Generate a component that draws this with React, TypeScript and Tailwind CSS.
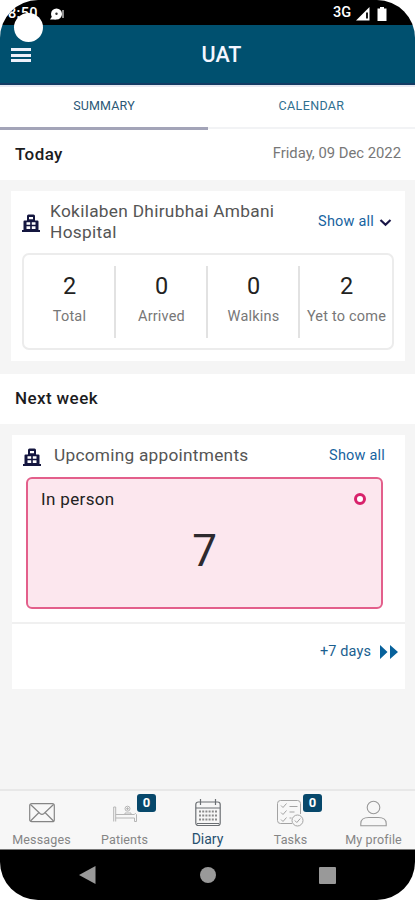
import React from 'react';
import { clsx } from 'clsx';

interface Stat {
  label: string;
  value: number;
}

interface NavItem {
  label: string;
  icon: React.ReactNode;
  badge?: number;
  isActive?: boolean;
}

const STATS: Stat[] = [
  { label: 'Total', value: 2 },
  { label: 'Arrived', value: 0 },
  { label: 'Walkins', value: 0 },
  { label: 'Yet to come', value: 2 },
];

// --- Icons ---
const HospitalIcon: React.FC = () => (
  <svg width="18" height="18" viewBox="0 0 18 18" className="mt-[2px] block shrink-0">
    <path fill="#14163f" d="M0 16h1.500V7.500q0-1 1-1H5V2q0-1.500 1.500-1.500h5Q13 .5 13 2v4.500h2.500q1 0 1 1V16H18v2H0z" />
    <path fill="#fff" d="M7 3h4v2.200H7zM4.500 8.300h3.700v2.400H4.500zM9.800 8.300h3.700v2.400H9.800zM4.500 12.300h3.700V15H4.500zM9.800 12.300h3.700V15H9.800z" />
  </svg>
);

const MailIcon: React.FC = () => (
  <svg width="26" height="20" viewBox="0 0 26 20" fill="none" stroke="#858585" strokeWidth="1.200">
    <rect x=".7" y=".7" width="24.600" height="18" rx="2" />
    <path d="M1.500 1.500 11 10.500q2 1.800 4 0L24.500 1.500M1.500 18l8.500-8.500M24.500 18 16 9.500" />
  </svg>
);

const BedIcon: React.FC = () => (
  <svg width="24" height="17" viewBox="0 0 24 17" fill="none" stroke="#b5b5b5" strokeWidth="1">
    <path d="M.7 2v14.500M2.700 2v14.500M.7 2h2M2.700 9.500h18.500q1.500-2 2.300 0v7h-2V13H2.700" />
    <circle cx="14.500" cy="3.700" r="2.500" />
    <path d="M14.500 2.200v3M13 3.700h3M12 9.500V8h6v1.500" />
  </svg>
);

const DiaryIcon: React.FC = () => (
  <svg width="26" height="28" viewBox="0 0 26 28" fill="none" stroke="#6b6f73" strokeWidth="1.200">
    <rect x=".8" y="3" width="24.400" height="23.500" rx="2.500" />
    <path d="M.8 9h24.400M5.500 0v6M20.500 0v6M2 24.500h22" />
    <path d="M4 12.500h18M4 16.500h18M4 20.500h18" strokeWidth="2" strokeDasharray="2 1.200" stroke="#8a8a8a" />
  </svg>
);

const TasksIcon: React.FC = () => (
  <svg width="27" height="27" viewBox="0 0 27 27" fill="none" stroke="#a3a3a3" strokeWidth="1">
    <path d="M15 23.500H3.500q-3 0-3-3v-17q0-3 3-3h17q3 0 3 3V14" />
    <path d="m4 5.500 2 2 3.500-4M4 12.500l2 2 3.500-4M4 19.500l2 2 3.500-4M12.500 6.500h8M12.500 12h5M12.500 18h2" />
    <circle cx="20.500" cy="20.500" r="5.500" />
    <path d="m17.800 20.500 2 2 3.500-4" />
  </svg>
);

const ProfileIcon: React.FC = () => (
  <svg width="27" height="27" viewBox="0 0 27 27" fill="none" stroke="#999" strokeWidth="1.100">
    <circle cx="13.500" cy="7.500" r="6.300" />
    <path d="M.8 25.700v-2.200q0-6 8-6h9.400q8 0 8 6v2.200z" />
  </svg>
);

const NAV_ITEMS: NavItem[] = [
  { label: 'Messages', icon: <MailIcon /> },
  { label: 'Patients', icon: <BedIcon />, badge: 0 },
  { label: 'Diary', icon: <DiaryIcon />, isActive: true },
  { label: 'Tasks', icon: <TasksIcon />, badge: 0 },
  { label: 'My profile', icon: <ProfileIcon /> },
];

const StatusBar: React.FC = () => (
  <div className="relative flex h-[25px] items-center justify-between bg-black pl-[8px] pr-[28px] text-white">
    <div className="flex items-center pt-[3px]">
      <span className="w-[42px] text-[14.5px] font-medium leading-none tracking-[0.3px]">8:50</span>
      <svg width="15" height="13" viewBox="0 0 15 13">
        <circle cx="6.500" cy="6" r="5.500" fill="#fff" />
        <path d="M0 11.500 3 7l3 4.500z" fill="#fff" />
        <circle cx="6.500" cy="5.700" r="1.200" fill="#333" />
        <path d="M13 2v8" stroke="#bbb" strokeWidth="1.500" />
      </svg>
    </div>
    <div className="flex items-center pt-[2px]">
      <span className="w-[23px] text-[14.5px] font-medium leading-none">3G</span>
      <svg width="14" height="14" viewBox="0 0 14 14">
        <path d="M13.500 0v13.500H0z" fill="#fff" />
        <path d="M11 5.500v6" stroke="#000" strokeWidth="1.800" />
      </svg>
      <svg width="10" height="14" viewBox="0 0 10 14" className="ml-[7px]">
        <path d="M3 0h4v1.500h2.500V14H.5V1.500H3z" fill="#fff" />
      </svg>
    </div>
    {/* Camera cutout */}
    <div className="absolute left-[14px] top-[13px] z-10 size-[29px] rounded-full bg-white" />
  </div>
);

const Header: React.FC = () => (
  <header className="flex h-[60px] items-center border-b-2 border-[#143b63] bg-[#00506f] px-[11px]">
    <div className="mt-[2px] flex w-5 flex-col gap-[2.5px]">
      <div className="h-[3px] bg-[#eef1fa]" />
      <div className="h-[3px] bg-[#eef1fa]" />
      <div className="h-[3px] bg-[#eef1fa]" />
    </div>
    <h1 className="flex-1 pl-[8px] pt-[2px] text-center text-[21.5px] font-medium leading-none text-[#f3f6ff]">UAT</h1>
  </header>
);

const Tabs: React.FC = () => (
  <div className="flex h-[45px] border-t-2 border-t-[#e8eaf2] bg-white text-[12.5px]">
    <div className="flex w-[208px] items-center justify-center border-b-[3px] border-[#a3a4b8] pb-[2px] tracking-[0.15px] text-[#2b5876]">
      SUMMARY
    </div>
    <div className="mb-px flex flex-1 items-center justify-center border-b-2 border-[#f2f3f5] pb-[2px] tracking-[0.35px] text-[#2f7090]">
      CALENDAR
    </div>
  </div>
);

const SectionTitle: React.FC<{ title: string; date?: string }> = ({ title, date }) => (
  <div className="flex h-[50px] items-center justify-between bg-white pl-[15px] pr-[14px]">
    <h2 className="text-[17px] font-medium tracking-[0.4px] text-[#1c1c1e]">{title}</h2>
    {date && <span className="pb-[3px] text-[14.8px] text-[#777]">{date}</span>}
  </div>
);

const StatsBox: React.FC = () => (
  <div className="mx-[11px] grid h-[97px] grid-cols-4 rounded-[7px] border-2 border-[#ececec] py-[10.500px]">
    {STATS.map((stat, i) => (
      <div
        key={stat.label}
        className={clsx(
          'flex h-[72px] flex-col items-center whitespace-nowrap pt-[6px]',
          i < STATS.length - 1 && 'border-r-2 border-[#e2e2e2]'
        )}
      >
        <span className="pl-px text-[23.5px] leading-7 text-[#222]">{stat.value}</span>
        <span className="mt-[7px] pl-px text-[14.5px] leading-5 tracking-[0.2px] text-[#777]">{stat.label}</span>
      </div>
    ))}
  </div>
);

const BottomNav: React.FC = () => (
  <nav className="grid h-[61px] grid-cols-5 border-b border-t-2 border-b-[#777] border-t-[#e8e8e8] bg-[#f7f7f7]">
    {NAV_ITEMS.map(item => (
      <div key={item.label} className="relative flex flex-col items-center">
        <div className="flex h-[39px] items-center justify-center pt-[5px]">{item.icon}</div>
        <span
          className={clsx(
            'whitespace-nowrap leading-[18px]',
            item.isActive ? 'text-[14px] text-[#27506f]' : 'pt-px text-[12.5px] tracking-[0.15px] text-[#858585]'
          )}
        >
          {item.label}
        </span>
        {item.badge !== undefined && (
          <span className="absolute left-[54px] top-[3px] flex h-[18px] w-[19px] items-center justify-center rounded-[3px] bg-[#07486b] text-[13px] font-bold text-white">
            {item.badge}
          </span>
        )}
      </div>
    ))}
  </nav>
);

const SystemBar: React.FC = () => (
  <div className="flex h-[50px] items-center justify-between bg-black pl-[79px] pr-[79px]">
    <svg width="17" height="18" viewBox="0 0 17 18">
      <path d="M16.500 0v18L0 9z" fill="#999" />
    </svg>
    <div className="size-4 rounded-full bg-[#999]" />
    <div className="size-[17px] rounded-[1px] bg-[#999]" />
  </div>
);

const App: React.FC = () => {
  return (
    <div className="h-[900px] w-[415px] bg-white font-['Roboto',sans-serif]">
      <div className="flex h-full flex-col overflow-hidden rounded-[38px] bg-[#f5f5f5]">
        <StatusBar />
        <Header />
        <Tabs />

        {/* Today */}
        <SectionTitle title="Today" date="Friday, 09 Dec 2022" />
        <section className="ml-[11px] mr-[10px] mt-[11px] h-[170px] bg-white">
          <div className="flex h-[62px] items-center pl-[11px] pr-[13px]">
            <HospitalIcon />
            <h3 className="ml-[10px] flex-1 whitespace-nowrap text-[17.3px] leading-[21px] tracking-[0.3px] text-[#555]">
              Kokilaben Dhirubhai Ambani
              <br />
              Hospital
            </h3>
            <span className="text-[14.5px] tracking-[0.2px] text-[#1763a0]">Show all</span>
            <svg width="13" height="9" viewBox="0 0 13 9" fill="none" className="ml-[5px]">
              <path d="m1.500 2 5 4.800 5-4.800" stroke="#1a1747" strokeWidth="2.200" />
            </svg>
          </div>
          <StatsBox />
        </section>

        {/* Next week */}
        <div className="mt-[13px]">
          <SectionTitle title="Next week" />
        </div>
        <section className="ml-[12px] mr-[10px] mt-[11px] h-[187px] bg-white">
          <div className="flex h-[42px] items-center pl-[11px] pr-[20px]">
            <HospitalIcon />
            <h3 className="ml-[13px] flex-1 text-[17.3px] tracking-[0.25px] text-[#555]">Upcoming appointments</h3>
            <span className="text-[14.5px] tracking-[0.2px] text-[#1763a0]">Show all</span>
          </div>
          <div className="ml-[14px] mr-[22px] flex h-[132px] flex-col rounded-[6px] border-2 border-[#e35f8b] bg-[#fce7ee] px-[13px] pt-[9px]">
            <div className="flex items-center justify-between pr-[2px]">
              <span className="text-[17px] leading-[22px] tracking-[0.35px] text-[#222]">In person</span>
              <div className="size-3 rounded-full border-[3px] border-[#d8226b] bg-white" />
            </div>
            <span className="mt-[16px] text-center text-[44px] leading-[50px] text-[#2d2a2e]">7</span>
          </div>
        </section>
        <section className="ml-[12px] mr-[10px] flex h-[67px] items-center justify-end border-t-2 border-[#f0f0f0] bg-white pb-[9px] pr-[7px]">
          <span className="text-[14.5px] tracking-[0.1px] text-[#1b5f8f]">+7 days</span>
          <svg width="18" height="14" viewBox="0 0 18 14" className="ml-[9px]">
            <path d="M0 0 7.500 7 0 14zM10 0l8 7-8 7z" fill="#07619b" />
          </svg>
        </section>

        <div className="flex-1" />
        <BottomNav />
        <SystemBar />
      </div>
    </div>
  );
};

export default App;
